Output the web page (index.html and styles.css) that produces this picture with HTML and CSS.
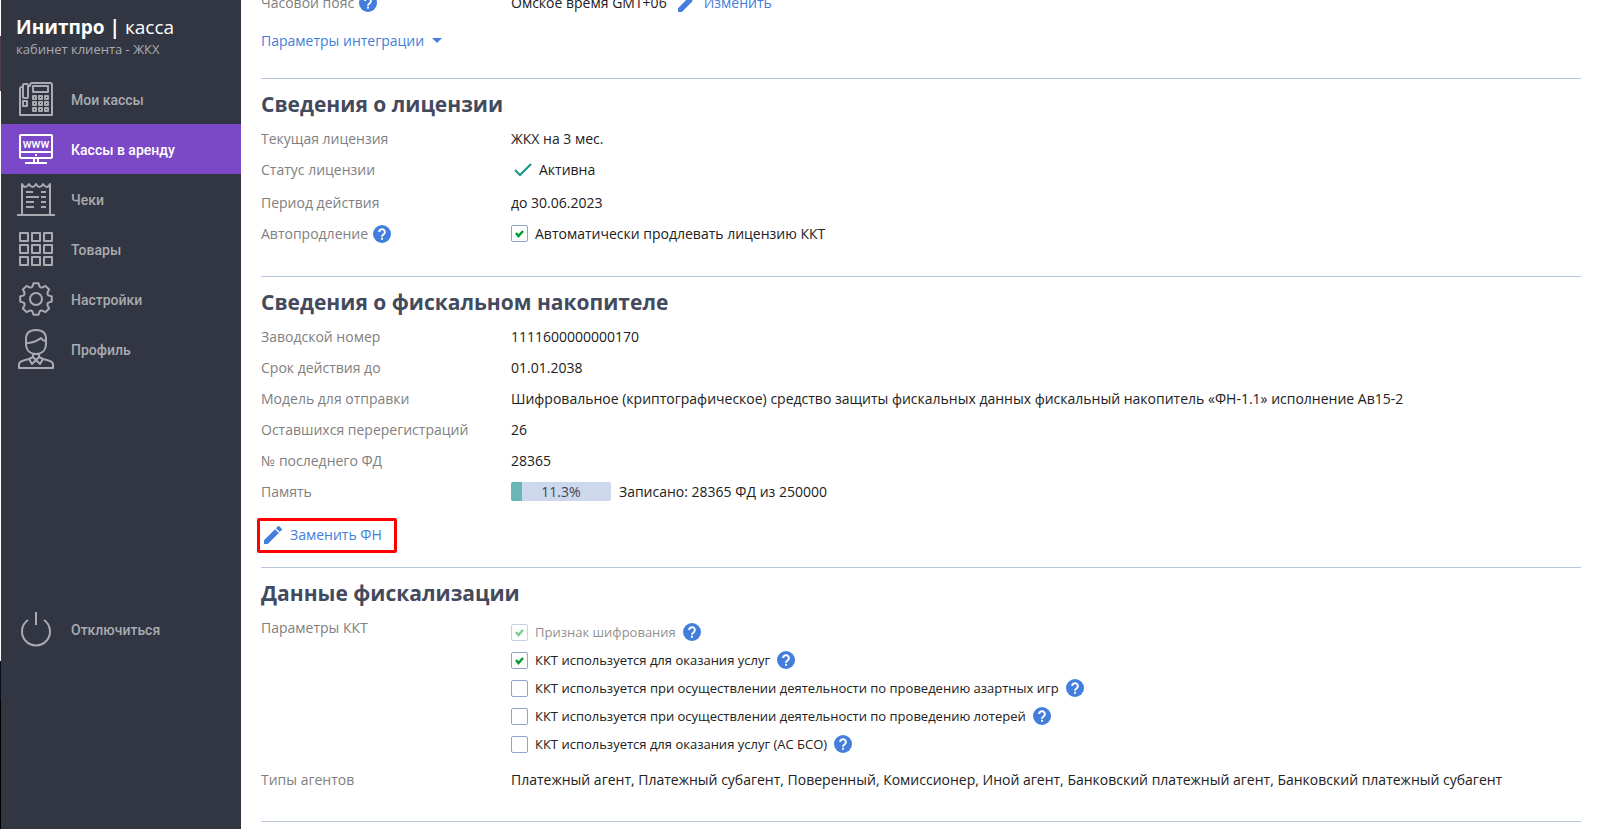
FILE: index.html
```
<!DOCTYPE html>
<html lang="ru">
<head>
    <meta charset="UTF-8">
    <meta name="viewport" content="width=device-width, initial-scale=1">
    <title>Инитпро | касса</title>
    <link rel="stylesheet" href="styles.css">
</head>
<body>
<svg class="sprite" aria-hidden="true">
    <symbol id="help" viewBox="0 0 24 24">
        <circle cx="12" cy="12" r="12" fill="#437edc"/>
        <path d="M8.200 9.400a3.800 3.700 0 1 1 6.200 2.800c-1.400 1.100-2.400 1.500-2.400 3.400" fill="none" stroke="#fff" stroke-width="2.600"/>
        <rect x="10.700" y="17" width="2.600" height="2.600" fill="#fff"/>
    </symbol>
    <symbol id="pencil" viewBox="0 0 18 18">
        <path d="M0 14.200V18h3.800L14.800 7 11 3.200zM17.700 4.100a1 1 0 0 0 0-1.400L15.300.3a1 1 0 0 0-1.400 0L12 2.200 15.800 6z" fill="#437edc"/>
    </symbol>
</svg>
<div class="page">
    <aside class="sidebar">
        <div class="logo">
            <div class="logo-name"><b>Инитпро |</b> касса</div>
            <div class="logo-sub">кабинет клиента - ЖКХ</div>
        </div>
        <nav class="menu">
            <a href="#">
                <svg class="icon" viewBox="0 0 40 40">
                    <path d="M6 8Q4 8 4 10V36H36V6Q36 4 34 4H16Q14 4 14 7H12"/>
                    <rect x="7" y="5" width="5" height="14" rx="1"/>
                    <rect x="17" y="7" width="15" height="6"/>
                    <rect x="7" y="22" width="4" height="5"/>
                    <path d="M17 17h3v3h-3zM23 17h3v3h-3zM29 17h3v3h-3zM17 23h3v3h-3zM23 23h3v3h-3zM29 23h3v3h-3zM17 29h3v3h-3zM23 29h3v3h-3zM29 29h3v3h-3z"/>
                </svg>
                <span>Мои кассы</span>
            </a>
            <a href="#" class="current">
                <svg class="icon" viewBox="0 0 40 40">
                    <rect x="4" y="6" width="32" height="23" rx="1"/>
                    <path d="M4 23h32M18 29v5M22 29v5M9 34h22M19 26h2"/>
                    <text x="20" y="19" text-anchor="middle">www</text>
                </svg>
                <span>Кассы в аренду</span>
            </a>
            <a href="#">
                <svg class="icon" viewBox="0 0 40 40">
                    <path d="M1 36h38M6 36V5q3 6 7 0q3.500 6 7 0q3.500 6 7 0q4 6 7 0v31M10 13h7M10 18h13M10 23h8M10 28h8M25 13h5M25 18h5M25 23h5M25 28h5"/>
                </svg>
                <span>Чеки</span>
            </a>
            <a href="#">
                <svg class="icon" viewBox="0 0 40 40">
                    <path d="M4 4h8v8H4zM16 4h8v8h-8zM28 4h8v8h-8zM4 16h8v8H4zM16 16h8v8h-8zM28 16h8v8h-8zM4 28h8v8H4zM16 28h8v8h-8zM28 28h8v8h-8z"/>
                </svg>
                <span>Товары</span>
            </a>
            <a href="#">
                <svg class="icon" viewBox="0 0 40 40">
                    <circle cx="20" cy="20" r="6"/>
                    <path d="M17.500 4.200h5L23.600 7.600Q25 9.200 27 8.200L29.500 6.900 33.100 10.500 31.800 13Q30.800 15 32.400 16.400L35.800 17.500v5L32.400 23.600Q30.800 25 31.800 27L33.100 29.500 29.500 33.100 27 31.800Q25 30.800 23.600 32.400L22.500 35.800h-5L16.400 32.400Q15 30.800 13 31.800L10.500 33.100 6.900 29.500 8.200 27Q9.200 25 7.600 23.600L4.200 22.500v-5L7.600 16.400Q9.200 15 8.200 13L6.900 10.500 10.500 6.900 13 8.200Q15 9.200 16.400 7.600z"/>
                </svg>
                <span>Настройки</span>
            </a>
            <a href="#">
                <svg class="icon" viewBox="0 0 40 40">
                    <path d="M10 16V10Q10 1 20 1T30 10V16Q29 25 20 25T10 16M10 14Q19 14 25 9Q27 12 30 12M17 25v3l3 3 3-3v-3M17 28l-4 2 3 5 4-4 4 4 3-5-4-2M13 30Q3 32 3 35v4h34v-4q0-3-10-5"/>
                </svg>
                <span>Профиль</span>
            </a>
            <a href="#" class="logout">
                <svg class="icon" viewBox="0 0 40 40">
                    <path d="M20 3v13M12 11a14 14 0 1 0 16 0"/>
                </svg>
                <span>Отключиться</span>
            </a>
        </nav>
    </aside>
    <main class="content">
        <section class="general">
            <div class="row">
                <div class="label">Часовой пояс <button class="help" type="button" aria-label="Справка"><svg><use href="#help"/></svg></button></div>
                <div class="value">Омское время GMT+06 <a href="#" class="edit"><svg><use href="#pencil"/></svg>Изменить</a></div>
            </div>
            <a href="#" class="dropdown">Параметры интеграции</a>
        </section>
        <section>
            <h2>Сведения о лицензии</h2>
            <div class="row">
                <div class="label">Текущая лицензия</div>
                <div class="value">ЖКХ на 3 мес.</div>
            </div>
            <div class="row status">
                <div class="label">Статус лицензии</div>
                <div class="value"><svg class="ok" viewBox="0 0 18 16"><path d="M1 8l5 5L17 2"/></svg>Активна</div>
            </div>
            <div class="row">
                <div class="label">Период действия</div>
                <div class="value">до 30.06.2023</div>
            </div>
            <div class="row">
                <div class="label">Автопродление <button class="help" type="button" aria-label="Справка"><svg><use href="#help"/></svg></button></div>
                <div class="value"><label class="check"><input type="checkbox" checked>Автоматически продлевать лицензию ККТ</label></div>
            </div>
        </section>
        <section class="storage">
            <h2>Сведения о фискальном накопителе</h2>
            <div class="row">
                <div class="label">Заводской номер</div>
                <div class="value">1111600000000170</div>
            </div>
            <div class="row">
                <div class="label">Срок действия до</div>
                <div class="value">01.01.2038</div>
            </div>
            <div class="row">
                <div class="label">Модель для отправки</div>
                <div class="value">Шифровальное (криптографическое) средство защиты фискальных данных фискальный накопитель «ФН-1.1» исполнение Ав15-2</div>
            </div>
            <div class="row">
                <div class="label">Оставшихся перерегистраций</div>
                <div class="value">26</div>
            </div>
            <div class="row">
                <div class="label">№ последнего ФД</div>
                <div class="value">28365</div>
            </div>
            <div class="row">
                <div class="label">Память</div>
                <div class="value">
                    <div class="progress"><div class="bar" style="width: 11.3%"></div><span>11.3%</span></div>
                    Записано: 28365 ФД из 250000
                </div>
            </div>
            <a href="#" class="edit replace"><svg><use href="#pencil"/></svg>Заменить ФН</a>
        </section>
        <section class="fiscal">
            <h2>Данные фискализации</h2>
            <div class="row">
                <div class="label">Параметры ККТ</div>
                <ul class="params">
                    <li><label class="check disabled"><input type="checkbox" checked disabled>Признак шифрования</label><button class="help" type="button" aria-label="Справка"><svg><use href="#help"/></svg></button></li>
                    <li><label class="check"><input type="checkbox" checked>ККТ используется для оказания услуг</label><button class="help" type="button" aria-label="Справка"><svg><use href="#help"/></svg></button></li>
                    <li><label class="check"><input type="checkbox">ККТ используется при осуществлении деятельности по проведению азартных игр</label><button class="help" type="button" aria-label="Справка"><svg><use href="#help"/></svg></button></li>
                    <li><label class="check"><input type="checkbox">ККТ используется при осуществлении деятельности по проведению лотерей</label><button class="help" type="button" aria-label="Справка"><svg><use href="#help"/></svg></button></li>
                    <li><label class="check"><input type="checkbox">ККТ используется для оказания услуг (АС БСО)</label><button class="help" type="button" aria-label="Справка"><svg><use href="#help"/></svg></button></li>
                </ul>
            </div>
            <div class="row">
                <div class="label">Типы агентов</div>
                <div class="value">Платежный агент, Платежный субагент, Поверенный, Комиссионер, Иной агент, Банковский платежный агент, Банковский платежный субагент</div>
            </div>
        </section>
    </main>
</div>
</body>
</html>
```
FILE: styles.css
```
* {
    box-sizing: border-box;
    margin: 0;
    padding: 0;
}

html, body {
    height: 100%;
}

body {
    overflow: hidden;
    background: #fff;
    color: #212121;
    font: 14px/19px "Open Sans", "Noto Sans", sans-serif;
}

a {
    color: #437edc;
    text-decoration: none;
}

.sprite {
    display: none;
}

.page {
    display: flex;
    min-height: 100%;
    /* edge of the window behind */
    background: linear-gradient(#fff 36px, #593c4c 36px, #593c4c 91px, #fff 91px, #fff 661px, #0b0e17 661px, #0b0e17 701px, #000 701px) 0 0 / 1px 100% no-repeat;
    padding-left: 1px;
}

/* sidebar */
.sidebar {
    flex: 0 0 240px;
    background: #323642;
}

.logo {
    height: 74px;
    padding: 14px 15px 0;
}

.logo-name {
    color: #fff;
    font-size: 19px;
    line-height: 26px;
}

.logo-sub {
    color: #a9aaae;
    font-size: 13px;
    line-height: 18px;
}

.menu a {
    display: flex;
    align-items: center;
    height: 50px;
    padding-left: 15px;
    color: #a9abb0;
    font: 500 14px/20px Roboto, sans-serif;
}

.menu a.current {
    background: #7b49c7;
    color: #fff;
}

.menu a.logout {
    margin-top: 230px;
}

.menu span {
    padding-top: 2px;
}

.icon {
    width: 40px;
    height: 40px;
    margin-right: 15px;
    fill: none;
    stroke: currentColor;
    stroke-width: 2;
    stroke-linejoin: round;
    overflow: visible;
}

.icon text {
    fill: currentColor;
    stroke: none;
    font-size: 12px;
}

/* content */
.content {
    flex: 1;
    min-width: 0;
    padding: 0 16px 0 20px;
}

section {
    padding-bottom: 27px;
    border-bottom: 1px solid #b7c6dc;
}

section.general {
    margin-top: -13px;
    padding-bottom: 28px;
}

section.storage {
    padding-bottom: 14px;
}

section.fiscal {
    padding-bottom: 26px;
}

h2 {
    padding: 12px 0 5px;
    color: #444a5e;
    font-size: 21px;
    line-height: 27px;
}

.row {
    display: flex;
    padding: 6px 0;
}

.row.status {
    padding-bottom: 8px;
}

.label {
    flex: 0 0 250px;
    color: #808080;
}

.value {
    display: flex;
    align-items: center;
    height: 19px;
}

.help {
    width: 18px;
    height: 18px;
    border: 0;
    background: none;
    vertical-align: top;
    cursor: pointer;
}

.help svg {
    display: block;
    width: 18px;
    height: 18px;
}

.label .help {
    margin: 1px 0 0 1px;
}

.edit {
    display: inline-flex;
    align-items: center;
}

.edit svg {
    width: 18px;
    height: 18px;
    margin-right: 8px;
}

.value .edit {
    margin-left: 11px;
}

.replace {
    height: 35px;
    margin: 11px 0 0 -4px;
    padding: 0 12px 2px 4px;
    border: 3px solid #f00;
    border-radius: 2px;
}

.dropdown {
    display: flex;
    align-items: center;
    margin-top: 13px;
}

.dropdown:after {
    content: "";
    margin-left: 8px;
    border: 5px solid transparent;
    border-top-color: #437edc;
    border-bottom: 0;
}

.ok {
    width: 18px;
    height: 16px;
    margin: 0 7px 0 3px;
    fill: none;
    stroke: #1a9484;
    stroke-width: 2;
}

.check {
    display: flex;
    align-items: center;
    cursor: pointer;
}

.check input {
    appearance: none;
    width: 17px;
    height: 17px;
    margin-right: 7px;
    border: 1px solid #8fa5cd;
    border-radius: 2px;
}

.check input:checked {
    background: url("data:image/svg+xml,%3Csvg xmlns='http://www.w3.org/2000/svg' viewBox='0 0 15 15'%3E%3Cpath d='M4 7l2.500 3L11 5' fill='none' stroke='%2300a030' stroke-width='2.500'/%3E%3C/svg%3E");
}

.check.disabled {
    opacity: .5;
}

.params {
    list-style: none;
    font-size: 13px;
}

.params li {
    display: flex;
    align-items: center;
    height: 28px;
}

.params .help {
    margin-left: 7px;
}

.progress {
    position: relative;
    width: 100px;
    height: 19px;
    margin-right: 8px;
    border-radius: 2px;
    background: #cdd8ec;
    text-align: center;
    overflow: hidden;
}

.progress .bar {
    position: absolute;
    height: 100%;
    background: #69b5b8;
}

.progress span {
    position: relative;
    color: #424754;
}
```
